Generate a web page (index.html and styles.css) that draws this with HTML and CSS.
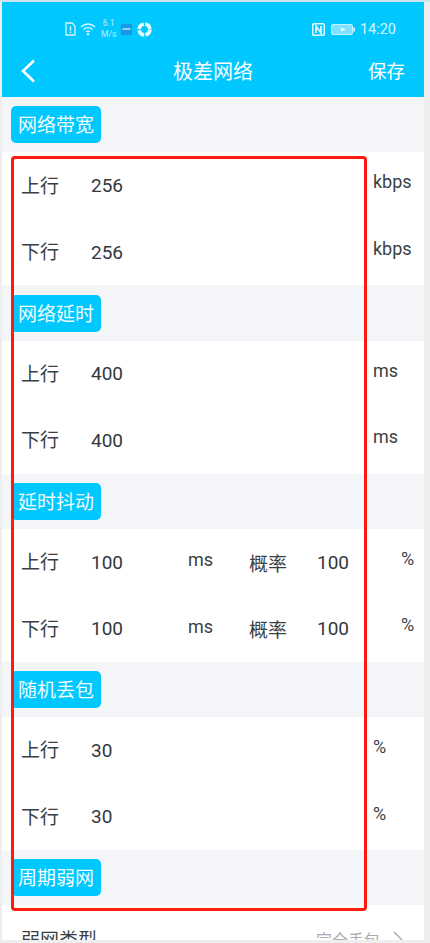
FILE: index.html
```html
<!DOCTYPE html>
<html lang="zh">
<head>
<meta charset="utf-8">
<title>极差网络</title>
<link rel="stylesheet" href="styles.css">
</head>
<body>
<div class="topline"></div>
<div class="screen">
  <header class="header">
    <div class="status">
      <div class="status-left">
        <svg class="ic-sim" viewBox="0 0 11 14"><path d="M1 1h6l3 3v9H1z" fill="none" stroke="#d8f6ff" stroke-width="1.3"/><path d="M5.5 4.5v4M5.5 9.6v1.4" stroke="#d8f6ff" stroke-width="1.4"/></svg>
        <svg class="ic-wifi" viewBox="0 0 16 14"><path d="M1 5c4-4 10-4 14 0M3.500 7.500c2.500-2.400 6.500-2.400 9 0M6 10c1.200-1 2.800-1 4 0" fill="none" stroke="#d8f6ff" stroke-width="1.300"/><circle cx="8" cy="12.300" r="1.200" fill="#d8f6ff"/></svg>
        <div class="speed"><span>6.1</span><span>M/s</span></div>
        <svg class="ic-app" viewBox="0 0 11 11"><rect width="11" height="11" rx="1" fill="#1e96e8"/><rect x="1.500" y="4" width="8" height="2" fill="#8fd4f5"/></svg>
        <svg class="ic-round" viewBox="0 0 14 14"><circle cx="7" cy="7" r="5" fill="none" stroke="#e8fbff" stroke-width="3.400" stroke-dasharray="6.600 1.250"/></svg>
      </div>
      <div class="status-right">
        <svg class="ic-nfc" viewBox="0 0 13 13"><rect x=".7" y=".7" width="11.600" height="11.600" rx="1.500" fill="none" stroke="#e4f9ff" stroke-width="1.500"/><path d="M4 10V3l5 7V3" fill="none" stroke="#e4f9ff" stroke-width="1.800"/></svg>
        <svg class="ic-batt" viewBox="0 0 24 11"><rect x=".5" y=".5" width="21" height="10" rx="1.500" fill="#7fe2ff" stroke="#c5f2ff"/><rect x="22.200" y="3.500" width="1.800" height="4" fill="#c5f2ff"/><path d="M6 5.500h4V3.500l5 2-5 2v-2z" fill="#f2fdff"/></svg>
        <span class="time">14:20</span>
      </div>
    </div>
    <div class="nav">
      <svg class="back" viewBox="0 0 16 24"><path d="M14 2 3 12.500 14 23" fill="none" stroke="#fff" stroke-width="2.600"/></svg>
      <span class="title">极差网络</span>
      <span class="save">保存</span>
    </div>
  </header>

  <section class="group">
    <div class="tag">网络带宽</div>
    <div class="card">
      <div class="row"><span class="dir">上行</span><span class="val">256</span><span class="unit">kbps</span></div>
      <div class="row"><span class="dir">下行</span><span class="val">256</span><span class="unit">kbps</span></div>
    </div>
  </section>
  <section class="group">
    <div class="tag">网络延时</div>
    <div class="card">
      <div class="row"><span class="dir">上行</span><span class="val">400</span><span class="unit">ms</span></div>
      <div class="row"><span class="dir">下行</span><span class="val">400</span><span class="unit">ms</span></div>
    </div>
  </section>
  <section class="group">
    <div class="tag">延时抖动</div>
    <div class="card">
      <div class="row"><span class="dir">上行</span><span class="val val-short">100</span><span class="unit unit-mid">ms</span><span class="prob">概率</span><span class="val val-prob">100</span><span class="unit unit-pct">%</span></div>
      <div class="row"><span class="dir">下行</span><span class="val val-short">100</span><span class="unit unit-mid">ms</span><span class="prob">概率</span><span class="val val-prob">100</span><span class="unit unit-pct">%</span></div>
    </div>
  </section>
  <section class="group">
    <div class="tag">随机丢包</div>
    <div class="card">
      <div class="row"><span class="dir">上行</span><span class="val">30</span><span class="unit">%</span></div>
      <div class="row"><span class="dir">下行</span><span class="val">30</span><span class="unit">%</span></div>
    </div>
  </section>
  <section class="group">
    <div class="tag">周期弱网</div>
    <div class="card">
      <div class="row row-type">
        <span class="dir">弱网类型</span>
        <span class="type-val">完全丢包</span>
        <svg class="chev" viewBox="0 0 10 18"><path d="M1 1l8 8-8 8" fill="none" stroke="#a9adb3" stroke-width="1.500"/></svg>
      </div>
    </div>
  </section>
  <div class="redbox"></div>
</div>
</body>
</html>
```
FILE: styles.css
```css
* { box-sizing: border-box; }
html, body { margin: 0; height: 943px; overflow: hidden; }
body { background: #eeeeee; font-family: Roboto, "Noto Sans CJK SC", sans-serif; color: #3a3f45; }
.topline { height: 2px; background: #cfe3ee; }
.screen { position: relative; margin-left: 2px; width: 422px; height: 938px; overflow: hidden; background: #f3f5f8; }

.header { height: 95px; background: #00c8ff; color: #fff; display: flex; flex-direction: column; }
.status { height: 54px; padding: 0 28px 0 63px; display: flex; justify-content: space-between; align-items: center; color: #d8f6ff; }
.status-left, .status-right { display: flex; align-items: center; }
.ic-sim { width: 11px; height: 14px; margin-right: 4px; }
.ic-wifi { width: 16px; height: 14px; margin-right: 5px; }
.speed { display: flex; flex-direction: column; align-items: center; font-size: 8.500px; line-height: 11px; margin-right: 5px; opacity: .85; }
.ic-app { width: 11px; height: 11px; margin-right: 5px; }
.ic-round { width: 15px; height: 15px; }
.ic-nfc { width: 13px; height: 13px; margin-right: 6px; }
.ic-batt { width: 24px; height: 11px; margin-right: 5px; }
.time { font-size: 14.500px; }

.nav { position: relative; height: 41px; display: flex; align-items: center; justify-content: center; }
.back { position: absolute; left: 18px; top: 2px; width: 16px; height: 25px; }
.title { font-size: 20px; line-height: 28px; margin-bottom: 9px; }
.save { position: absolute; right: 19px; top: 2px; font-size: 18.500px; line-height: 28px; }

.group { padding-top: 9.300px; }
.tag { width: 90px; height: 37px; margin-left: 9px; margin-bottom: 9px; border-radius: 5px; background: #00c8ff; color: #f2fcff; font-size: 19px; line-height: 39px; text-align: center; }
.card { background: #fff; height: 133px; display: flex; flex-direction: column; }

.row { position: relative; height: 66.500px; display: flex; align-items: center; padding-left: 19px; font-size: 19px; }
.dir { width: 70px; flex: none; line-height: 26px; padding-top: 2px; }
.val { flex: none; color: #33383e; }
.val-short { width: 97px; }
.unit { position: absolute; left: 371px; top: 20px; font-size: 18px; line-height: 20px; }
.unit-mid { position: static; width: 61px; flex: none; margin-top: -4px; }
.prob { width: 68px; flex: none; }
.val-prob { width: 60px; }
.unit-pct { left: 399px; }

.row-type { justify-content: flex-start; padding-right: 21px; align-items: flex-start; padding-top: 23px; }
.row-type .dir { width: auto; flex: 1; padding-top: 0; }
.type-val { color: #a9adb3; font-size: 16px; line-height: 26px; }
.chev { width: 10px; height: 18px; margin-left: 13px; margin-top: 3px; }

.redbox { position: absolute; left: 9px; top: 154px; width: 356px; height: 755px; border: 3px solid #ff1a0f; border-radius: 4px; pointer-events: none; }
```
